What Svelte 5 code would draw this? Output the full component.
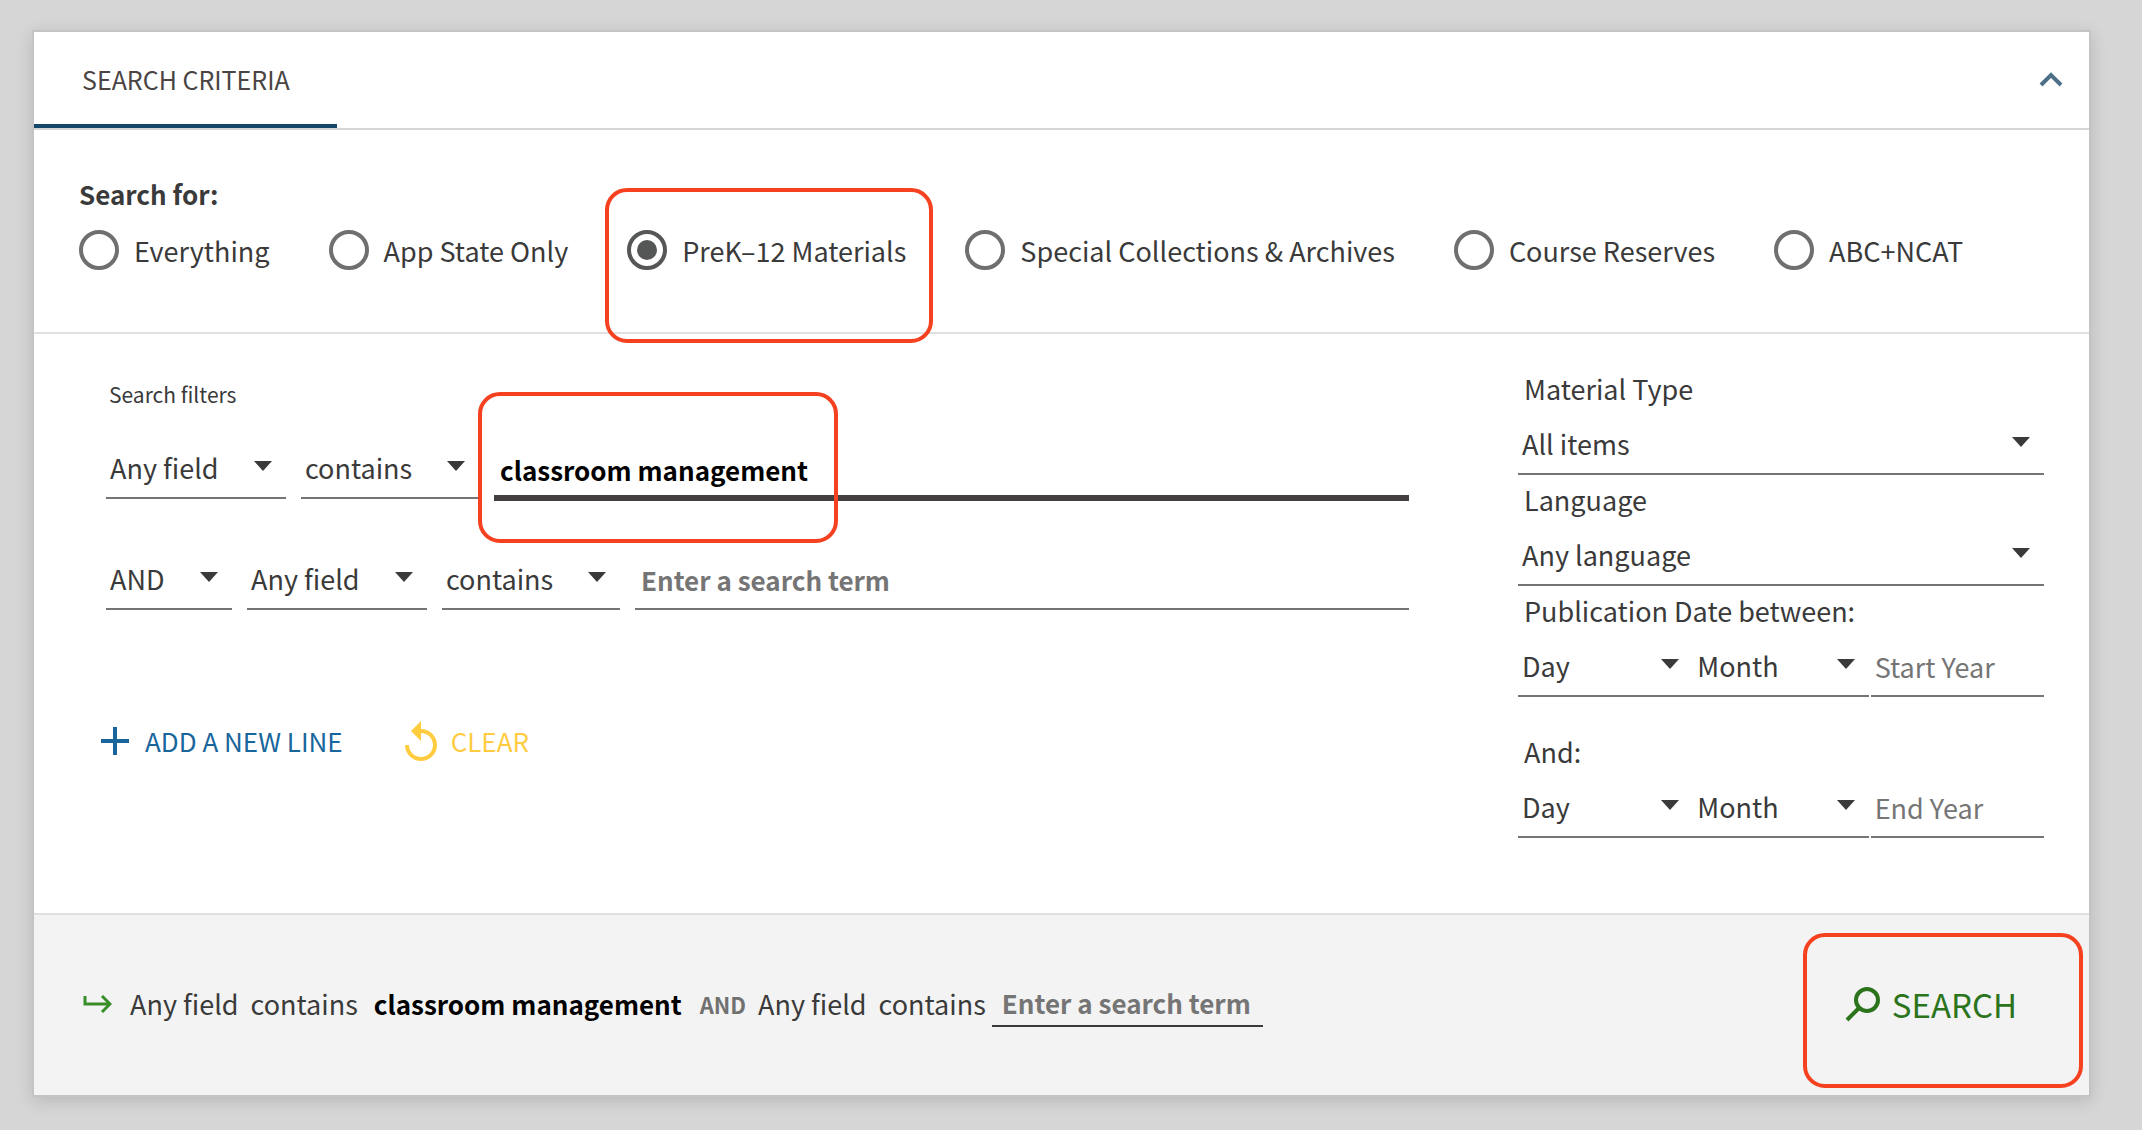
<script lang="ts">
	type Scope = { id: string; label: string; marked?: boolean };

	const scopes: Scope[] = [
		{ id: 'everything', label: 'Everything' },
		{ id: 'appstate', label: 'App State Only' },
		{ id: 'prek12', label: 'PreK–12 Materials', marked: true },
		{ id: 'special', label: 'Special Collections & Archives' },
		{ id: 'reserves', label: 'Course Reserves' },
		{ id: 'abcncat', label: 'ABC+NCAT' }
	];
	const operators = ['AND', 'OR', 'NOT'];
	const fields = ['Any field', 'Title', 'Author', 'Subject'];
	const matches = ['contains', 'is exact', 'starts with'];
	const materials = ['All items', 'Books', 'Articles', 'Journals'];
	const languages = ['Any language', 'English', 'Spanish', 'French'];
	const days = ['Day', ...Array.from({ length: 31 }, (_, i) => String(i + 1))];
	const months = ['Month', ...Array.from({ length: 12 }, (_, i) => String(i + 1))];
	const dates = [
		{ id: 'start', title: 'Publication Date between:', year: 'Start Year' },
		{ id: 'end', title: 'And:', year: 'End Year' }
	];
	const PROMPT = 'Enter a search term';

	let scope = $state('prek12');
	let lines = $state([
		{ op: '', field: 'Any field', match: 'contains', term: 'classroom management' },
		{ op: 'AND', field: 'Any field', match: 'contains', term: '' }
	]);

	function addLine() {
		lines.push({ op: 'AND', field: 'Any field', match: 'contains', term: '' });
	}

	function clearLines() {
		for (const line of lines) line.term = '';
	}
</script>

{#snippet caret()}
	<svg class="caret" viewBox="0 0 18 10" aria-hidden="true"><path d="M0 0h18l-9 10z" /></svg>
{/snippet}

<form class="card" onsubmit={(e) => e.preventDefault()}>
	<header>
		<h2>SEARCH CRITERIA</h2>
		<button type="button" class="collapse" aria-label="Collapse search criteria">
			<svg viewBox="0 0 24 18" aria-hidden="true"><path d="M2 14 12 4l10 10" /></svg>
		</button>
	</header>

	<fieldset class="scopes">
		<legend>Search for:</legend>
		<div class="options">
			{#each scopes as s}
				<label class="option">
					<input type="radio" name="scope" value={s.id} bind:group={scope} />
					<span class="name">{s.label}</span>
					{#if s.marked}<span class="mark"></span>{/if}
				</label>
			{/each}
		</div>
	</fieldset>

	<div class="criteria">
		<div class="filters">
			<p class="caption">Search filters</p>
			<div class="lines">
				{#each lines as line, i}
					<div class="line">
						{#if i > 0}
							<div class="select operator">
								<select bind:value={line.op} aria-label="Operator">
									{#each operators as o}<option>{o}</option>{/each}
								</select>
								{@render caret()}
							</div>
						{/if}
						<div class="select field">
							<select bind:value={line.field} aria-label="Search field">
								{#each fields as f}<option>{f}</option>{/each}
							</select>
							{@render caret()}
						</div>
						<div class="select precision">
							<select bind:value={line.match} aria-label="Match type">
								{#each matches as m}<option>{m}</option>{/each}
							</select>
							{@render caret()}
						</div>
						<div class="term">
							<input
								type="text"
								class:active={i == 0}
								bind:value={line.term}
								placeholder={PROMPT}
								aria-label="Search term"
							/>
							{#if i == 0}<span class="mark"></span>{/if}
						</div>
					</div>
				{/each}
			</div>
			<div class="actions">
				<button type="button" class="add" onclick={addLine}>
					<svg viewBox="0 0 28 28" aria-hidden="true"><path d="M12 0h4v12h12v4H16v12h-4V16H0v-4h12z" /></svg>
					ADD A NEW LINE
				</button>
				<button type="button" class="clear" onclick={clearLines}>
					<svg viewBox="4 1 16 20" aria-hidden="true">
						<path d="M12 5V1L7 6l5 5V7c3.310 0 6 2.690 6 6s-2.690 6-6 6-6-2.690-6-6H4c0 4.420 3.580 8 8 8s8-3.580 8-8-3.580-8-8-8z" />
					</svg>
					CLEAR
				</button>
			</div>
		</div>

		<div class="limits">
			<label for="material">Material Type</label>
			<div class="select">
				<select id="material">
					{#each materials as m}<option>{m}</option>{/each}
				</select>
				{@render caret()}
			</div>
			<label for="language">Language</label>
			<div class="select">
				<select id="language">
					{#each languages as l}<option>{l}</option>{/each}
				</select>
				{@render caret()}
			</div>
			{#each dates as d}
				<div class="range">
					<label for="{d.id}-day">{d.title}</label>
					<div class="date">
						<div class="select">
							<select id="{d.id}-day">
								{#each days as day}<option>{day}</option>{/each}
							</select>
							{@render caret()}
						</div>
						<div class="select">
							<select aria-label="Month">
								{#each months as m}<option>{m}</option>{/each}
							</select>
							{@render caret()}
						</div>
						<input type="text" placeholder={d.year} aria-label={d.year} />
					</div>
				</div>
			{/each}
		</div>
	</div>

	<footer>
		<div class="summary">
			<svg class="arrow" viewBox="0 0 29 18" aria-hidden="true">
				<path d="M2 1v8h24M19 1l8 8-8 8" />
			</svg>
			{#each lines as line, i}
				{#if i > 0}<span class="op">{line.op}</span>{/if}
				<span>{line.field}</span>
				<span class="match">{line.match}</span>
				{#if line.term}
					<strong>{line.term}</strong>
				{:else}
					<span class="prompt">{PROMPT}</span>
				{/if}
			{/each}
		</div>
		<button type="submit" class="search">
			<svg viewBox="0 0 35 35" aria-hidden="true">
				<circle cx="22" cy="13" r="11" />
				<path d="M14 21 2 33" />
			</svg>
			SEARCH
			<span class="mark"></span>
		</button>
	</footer>
</form>

<style>
	:global(body) {
		background: #d6d6d6;
	}

	.card {
		margin: 30px 51px 33px 32px;
		border: 2px solid #c4c4c4;
		background: #fff;
		box-shadow: 0 4px 16px rgba(0, 0, 0, 0.14);
		color: #3a3a3a;
		font-family: 'Noto Sans CJK SC', 'Open Sans', sans-serif;
		font-size: 27px;
		line-height: 36px;
	}

	button,
	input,
	select {
		margin: 0;
		padding: 0;
		border: 0;
		border-radius: 0;
		background: none;
		color: inherit;
		font: inherit;
		outline: none;
	}

	button {
		display: flex;
		align-items: center;
		cursor: pointer;
	}

	svg {
		flex: none;
	}

	header {
		display: flex;
		justify-content: space-between;
		border-bottom: 2px solid #d5d5d5;
	}

	h2 {
		margin: 0;
		padding: 29px 47px 27px 48px;
		border-bottom: 4px solid #14476a;
		font-size: 25px;
		font-weight: 400;
		color: #4a4444;
	}

	.collapse {
		padding: 0 26px;
	}

	.collapse svg {
		width: 24px;
		height: 18px;
		fill: none;
		stroke: #4d6f88;
		stroke-width: 4;
	}

	.scopes {
		margin: 0;
		padding: 46px 45px 62px;
		border: 0;
		border-bottom: 2px solid #e0e0e0;
	}

	legend {
		float: left;
		padding: 0;
		font-size: 26px;
		font-weight: 600;
	}

	.options {
		clear: both;
		display: flex;
		gap: 59px;
		padding-top: 18px;
	}

	.option {
		position: relative;
		display: flex;
		align-items: center;
		gap: 15px;
		white-space: nowrap;
	}

	.name {
		padding-top: 2px;
	}

	.option input {
		appearance: none;
		display: grid;
		place-items: center;
		box-sizing: border-box;
		width: 40px;
		height: 40px;
		border: 4px solid #6f6f6f;
		border-radius: 50%;
	}

	.option input:checked {
		border-color: #555756;
	}

	.option input:checked::before {
		content: '';
		width: 20px;
		height: 20px;
		border-radius: 50%;
		background: #555756;
	}

	/* red highlight drawn over whatever it surrounds */
	.mark {
		position: absolute;
		border: 4px solid #f54120;
		border-radius: 22px;
		pointer-events: none;
	}

	.option .mark {
		inset: -42px -27px -73px -22px;
	}

	.criteria {
		display: flex;
		gap: 109px;
		padding: 30px 45px 75px 72px;
	}

	.filters {
		flex: 1;
	}

	.caption {
		margin: 0;
		padding: 14px 0 27px 3px;
		font-size: 21px;
		line-height: 32px;
	}

	.lines {
		display: grid;
		gap: 49px;
	}

	.line {
		display: flex;
		gap: 15px;
	}

	.select {
		display: grid;
		align-items: center;
	}

	.select select,
	.select .caret {
		grid-area: 1 / 1;
	}

	select,
	input[type='text'] {
		appearance: none;
		box-sizing: border-box;
		width: 100%;
		height: 62px;
		padding: 2px 4px 0;
		border-bottom: 2px solid #757575;
	}

	.caret {
		justify-self: end;
		width: 18px;
		height: 10px;
		margin: 0 14px 4px 0;
		fill: #3a3a3a;
		pointer-events: none;
	}

	.operator {
		width: 126px;
	}

	.field {
		width: 180px;
	}

	.precision {
		width: 178px;
	}

	.term {
		position: relative;
		flex: 1;
	}

	.term input {
		padding: 2px 6px 0;
		font-size: 26px;
		font-weight: 600;
		color: #000;
	}

	.term input.active {
		height: 64px;
		margin-bottom: -2px;
		padding-top: 6px;
		border-bottom: 6px solid #444041;
	}

	input::placeholder {
		color: #757575;
		opacity: 1;
	}

	.term .mark {
		box-sizing: border-box;
		top: -45px;
		left: -16px;
		width: 360px;
		height: 151px;
	}

	.actions {
		display: flex;
		gap: 62px;
		margin-top: 111px;
		font-size: 26px;
	}

	.add {
		margin-left: -5px;
		gap: 16px;
		color: #18669c;
	}

	.add svg {
		width: 28px;
		height: 28px;
		fill: currentColor;
	}

	.clear {
		gap: 14px;
		color: #ffcc40;
	}

	.clear svg {
		width: 32px;
		height: 40px;
		fill: currentColor;
	}

	.limits {
		width: 526px;
	}

	.limits label {
		display: block;
		padding-left: 6px;
		line-height: 49px;
	}

	.range + .range {
		margin-top: 30px;
	}

	.date {
		display: grid;
		grid-template-columns: 1fr 1fr 1fr;
	}

	.date input {
		justify-self: end;
		width: calc(100% - 2px);
	}

	footer {
		display: flex;
		justify-content: space-between;
		align-items: center;
		height: 178px;
		padding: 0 72px 2px 49px;
		border-top: 2px solid #dfdfdf;
		background: #f3f3f3;
	}

	.summary {
		display: flex;
		align-items: center;
		color: #3a3a3a;
	}

	.arrow {
		width: 29px;
		height: 18px;
		margin-right: 18px;
		fill: none;
		stroke: #388e28;
		stroke-width: 3;
	}

	.match {
		margin-left: 12px;
	}

	.summary strong {
		margin: 0 18px 0 16px;
		font-size: 26px;
		font-weight: 600;
		color: #000;
	}

	.op {
		margin-right: 12px;
		font-size: 22px;
		font-weight: 600;
		color: #707070;
	}

	.prompt {
		margin-left: 6px;
		padding: 4px 12px 4px 10px;
		border-bottom: 2px solid #3a3a3a;
		font-size: 26px;
		font-weight: 600;
		color: #757575;
	}

	.search {
		position: relative;
		gap: 12px;
		font-size: 33px;
		color: #2b741b;
	}

	.search svg {
		width: 35px;
		height: 35px;
		fill: none;
		stroke: currentColor;
		stroke-width: 4;
	}

	.search .mark {
		inset: -53px -66px -66px -42px;
	}
</style>
